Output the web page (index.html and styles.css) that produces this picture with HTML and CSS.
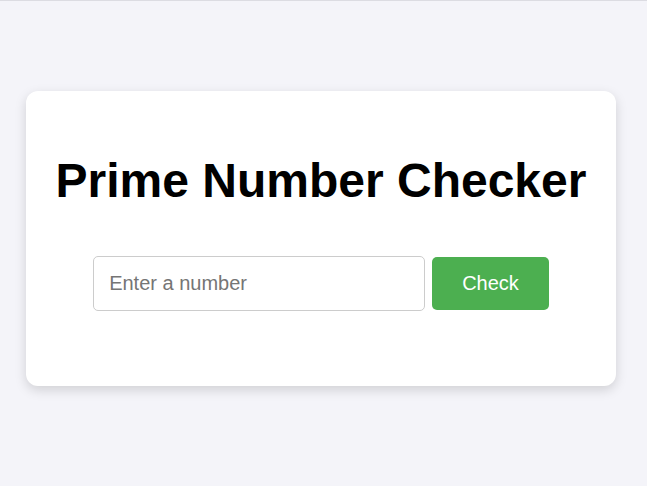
FILE: index.html
```html
<!DOCTYPE html>
<html lang="en">
<head>
<meta charset="utf-8">
<title>Prime Number Checker</title>
<link rel="stylesheet" href="styles.css">
</head>
<body>
<div class="page">
  <div class="card">
    <h1 class="title">Prime Number Checker</h1>
    <div class="row">
      <input class="field" type="number" placeholder="Enter a number">
      <button class="btn" type="button">Check</button>
    </div>
  </div>
</div>
</body>
</html>
```

FILE: styles.css
```css
html, body {
  margin: 0;
  padding: 0;
}
body {
  background: #f4f4f9;
  border-top: 1px solid #dcdce2;
  font-family: "Liberation Sans", Arial, sans-serif;
  height: 485px;
  overflow: hidden;
}
.page {
  padding: 90px 31px 0 26px;
}
.card {
  background: #ffffff;
  border-radius: 12px;
  box-shadow: 0 4px 12px rgba(0, 0, 0, 0.15);
  padding: 62px 20px 75px;
  text-align: center;
}
.title {
  margin: 0 0 48px;
  font-size: 48px;
  font-weight: bold;
  line-height: 55px;
  color: #000;
  white-space: nowrap;
}
.row {
  display: flex;
  justify-content: center;
  align-items: center;
  gap: 7px;
}
.field {
  box-sizing: border-box;
  width: 332px;
  height: 55px;
  padding: 0 15px;
  font-family: "Liberation Sans", Arial, sans-serif;
  font-size: 20px;
  border: 1px solid #cccccc;
  border-radius: 5px;
  color: #000;
  outline: none;
  -moz-appearance: textfield;
}
.field::-webkit-outer-spin-button,
.field::-webkit-inner-spin-button {
  -webkit-appearance: none;
  margin: 0;
}
.field::placeholder {
  color: #757575;
}
.btn {
  box-sizing: border-box;
  height: 53px;
  padding: 0 30px;
  font-family: "Liberation Sans", Arial, sans-serif;
  font-size: 20px;
  color: #ffffff;
  background: #4caf50;
  border: none;
  border-radius: 5px;
  cursor: pointer;
}
```
